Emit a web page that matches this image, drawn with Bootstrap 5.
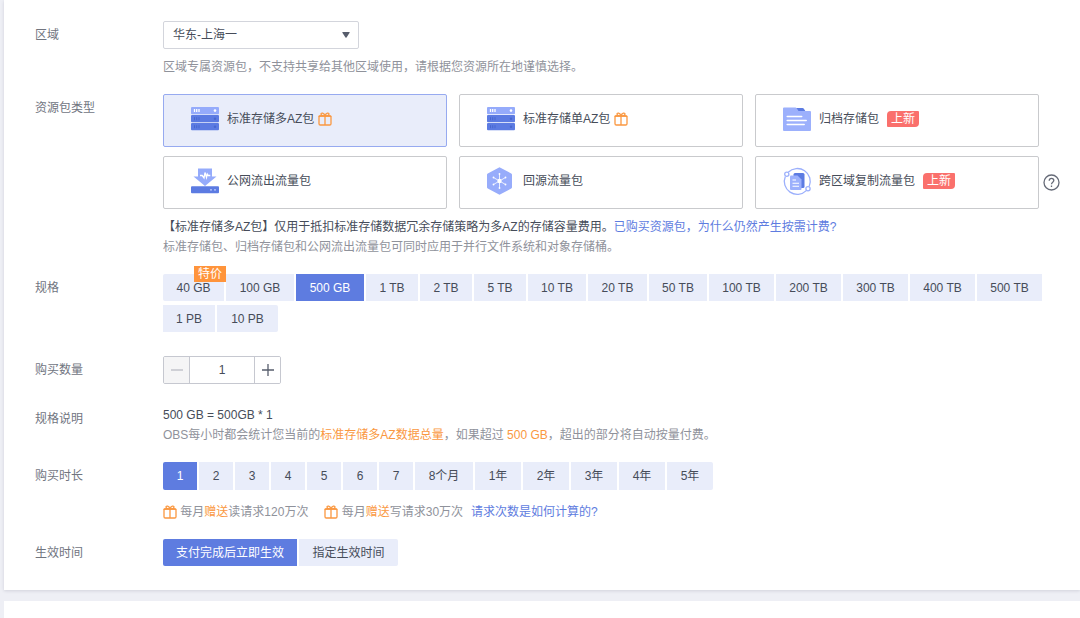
<!DOCTYPE html>
<html lang="zh-CN">
<head>
<meta charset="utf-8">
<meta name="viewport" content="width=device-width, initial-scale=1">
<title>购买资源包</title>
<link href="https://cdn.jsdelivr.net/npm/bootstrap@5.3.0/dist/css/bootstrap.min.css" rel="stylesheet">
<style>
  :root { --ink:#464c59; --soft:#71757f; --muted:#8f929b; --brand:#5e7ce0; --tint:#e9edfa; --orange:#fa9841; }
  body { background:#eeeff5; color:var(--ink); font:12px/20px "Liberation Sans","Noto Sans CJK SC",sans-serif; }
  a { color:var(--brand); text-decoration:none; }
  .panel { background:#fff; box-shadow:0 1px 3px rgba(60,65,85,.16); }
  .order-panel { padding:21px 20px 24px 31px; margin-bottom:11px; }
  .next-panel { min-height:16px; box-shadow:none; }
  .form-line { margin-bottom:17px; }
  .field-label { flex:0 0 128px; color:var(--soft); padding-top:4px; }
  .field-body { flex:1 1 0; min-width:0; }
  .hint { color:var(--muted); }
  .hot { color:var(--orange); }
  .region-select { width:196px; height:28px; padding:0 28px 0 9px; font-size:12px; line-height:20px; color:var(--ink); border:1px solid #d3d5dc; border-radius:2px;
    background:#fff url("data:image/svg+xml,%3Csvg xmlns='http://www.w3.org/2000/svg' viewBox='0 0 8 6'%3E%3Cpath d='M.8 0h6.4q.8 0 .4.7L4.5 5.4q-.5.6-1 0L.4.7Q0 0 .8 0z' fill='%23575d6c'/%3E%3C/svg%3E") no-repeat right 8px center/8px 6px; }
  .pack-grid { display:grid; grid-template-columns:repeat(3,1fr); gap:9px 12px; flex:1 1 0; }
  .pack { display:flex; align-items:center; gap:8px; height:53px; padding:0 27px 3px; border:1px solid #c9cacd; border-radius:2px; background:#fff; color:var(--ink); text-align:left; }
  .pack.active { background:var(--tint); border-color:#97aaf0; }
  .pack > svg { flex:none; width:30px; height:28px; margin-right:-2px; overflow:visible; }
  .gift { width:14px; height:14px; fill:none; stroke:var(--orange); stroke-width:1.3; vertical-align:-3px; }
  .new-tag { background:#fa706c; color:#fff; line-height:16px; padding:0 4px; border-radius:4px 1px; }
  .help { height:53px; }
  .opt { height:27px; padding:0 4px; border:0; border-radius:0; background:var(--tint); color:var(--ink); font-size:12px; line-height:20px; }
  .opt:hover, .pack:hover { color:var(--brand); }
  .opt.active { background:var(--brand); color:#fff; }
  .opts > .opt:first-child { border-radius:2px 0 0 2px; }
  .opts > .opt:last-child { border-radius:0 2px 2px 0; }
  .opts { gap:4px 2px; }
  .opts-tall .opt { height:28px; }
  .w-a { width:34px; } .w-b { width:46px; } .w-c { width:52px; } .w-d { width:58px; } .w-e { width:61px; }
  .w-f { width:65px; } .w-g { width:68px; } .w-h { width:99px; } .w-i { width:134px; } .w-j { width:59px; }
  .sale-tag { position:absolute; top:-8px; right:-2px; width:32px; height:16px; line-height:16px; background:#ff943b; color:#fff; text-align:center; }
  .stepper { width:118px; height:28px; border:1px solid #c6c8d0; border-radius:2px; }
  .stepper button { width:25px; padding:0; border:0; background:#fff; color:#575d6c; }
  .stepper button:disabled { background:#f5f5f6; color:#a9acb5; }
  .stepper input { flex:1 1 0; min-width:0; border:solid #c6c8d0; border-width:0 1px; text-align:center; color:var(--ink); padding:0; border-radius:0; }
</style>
</head>
<body>
<svg width="0" height="0" class="d-none" aria-hidden="true">
  <symbol id="gift" viewBox="0 0 14 14"><rect x="1" y="4" width="12" height="9" rx="1.3"/><path d="M1 5V4.800Q1 4 2 4H12Q13 4 13 5M7 4V13M7 4C4.500 4 3 3.200 3 2.100C3 .6 6 .3 7 4C8 .3 11 .6 11 2.100C11 3.200 9.500 4 7 4"/></symbol>
  <symbol id="server" viewBox="0 0 30 28"><rect x="0" y="2" width="28" height="7.300" rx="1" fill="#95abfb"/><path d="M3.500 4.100v3M5.700 4.100v3M8 4.100v3" stroke="#fff" stroke-width="1.300"/><circle cx="24" cy="5.600" r="1.300" fill="#fff"/><rect x="0" y="10" width="28" height="7.300" rx="1" fill="#5c7be2"/><rect x="0" y="18" width="28" height="7.300" rx="1" fill="#5c7be2"/><path d="M3.500 12.200v3M5.700 12.200v3M8 12.200v3M3.500 20.200v3M5.700 20.200v3M8 20.200v3" stroke="#4868d0"/><circle cx="24" cy="13.700" r="1.200" fill="#4868d0"/><circle cx="24" cy="21.700" r="1.200" fill="#4868d0"/></symbol>
</svg>
<main class="ms-1 min-vh-100 d-flex flex-column">
  <form class="panel order-panel">
    <div class="form-line d-flex">
      <label class="field-label" for="region">区域</label>
      <div class="field-body">
        <select id="region" class="form-select region-select"><option>华东-上海一</option></select>
        <div class="hint mt-2">区域专属资源包，不支持共享给其他区域使用，请根据您资源所在地谨慎选择。</div>
      </div>
    </div>

    <div class="form-line d-flex">
      <div class="field-label">资源包类型</div>
      <div class="field-body">
        <div class="d-flex align-items-end">
          <div class="pack-grid">
            <button type="button" class="pack active" aria-pressed="true"><svg><use href="#server"/></svg><span>标准存储多AZ包 <svg class="gift"><use href="#gift"/></svg></span></button>
            <button type="button" class="pack"><svg><use href="#server"/></svg><span>标准存储单AZ包 <svg class="gift"><use href="#gift"/></svg></span></button>
            <button type="button" class="pack"><svg viewBox="0 0 30 28"><path d="M12 3h7.500q1 0 1.500 1l2 3H14z" fill="#5c7be2"/><path d="M1 2.500h11.500q.8 0 1.200.7L15.500 6H27q1 0 1 1v18q0 1-1 1H1q-1 0-1-1V3.500q0-1 1-1z" fill="#9cb0fc"/><path d="M4.200 11.500h14.500M4.200 15.500h19M4.200 19.500h17" stroke="#fff" stroke-width="1.500" stroke-linecap="round"/></svg><span>归档存储包</span><span class="new-tag">上新</span></button>
            <button type="button" class="pack"><svg viewBox="0 0 30 28"><path d="M7 1.500h14v8h4.500L14 19 2.500 9.500H7z" fill="#95abfb"/><path d="M9 8.500h2.200l1.800 2.500 1-5.500 1.500 5 .8-3.500 1 1.500h2" fill="none" stroke="#fff" stroke-width="1.300"/><rect y="19.300" width="28" height="7" rx="1" fill="#5c7be2"/><circle cx="20" cy="22.800" r=".9" fill="#c3d0ff"/><circle cx="24" cy="22.800" r=".9" fill="#c3d0ff"/></svg><span>公网流出流量包</span></button>
            <button type="button" class="pack"><svg viewBox="0 0 30 28"><path d="M12.500.2 24.200 6.500q.8.400.8 1.300V20.200q0 .9-.8 1.300L12.500 27.800.8 21.500Q0 21.100 0 20.200V7.800Q0 6.900.8 6.500z" fill="#97acfb"/><path d="M12.500 14V7M12.500 14V21M12.500 14 6.500 10.500M12.500 14 18.500 10.500M12.500 14 6.500 17.500M12.500 14 18.500 17.500" stroke="#fff" stroke-width=".8"/><circle cx="12.500" cy="14" r="2.200" fill="#fff"/><g fill="#fff"><circle cx="12.500" cy="7" r=".9"/><circle cx="12.500" cy="21" r=".9"/><circle cx="6.500" cy="10.500" r=".9"/><circle cx="18.500" cy="10.500" r=".9"/><circle cx="6.500" cy="17.500" r=".9"/><circle cx="18.500" cy="17.500" r=".9"/></g></svg><span>回源流量包</span></button>
            <button type="button" class="pack"><svg viewBox="0 0 30 28"><g fill="none" stroke="#9cb0fc" stroke-width="1.300"><path d="M5.200 5.300A12.900 12.900 0 0 1 26.200 19.500M23.300 23.600A12.900 12.900 0 0 1 2.300 9.500"/><circle cx="3.800" cy="7.300" r="2.100"/><circle cx="25" cy="21.800" r="2.100"/></g><rect x="10.500" y="6" width="11" height="15" rx="1.500" fill="#5c7be2"/><path d="M8 8.500h6.500L18.500 12.500V22q0 1-1 1H8q-1 0-1-1V9.500q0-1 1-1z" fill="#9cb0fc"/><path d="M9.500 13h3.500M9.500 16.200h6.500M9.500 19.200h6.500" stroke="#fff" stroke-width="1.100"/></svg><span>跨区域复制流量包</span><span class="new-tag">上新</span></button>
          </div>
          <a href="#help" class="help d-flex align-items-center ms-1" aria-label="帮助"><svg width="17" height="17" viewBox="0 0 17 17" fill="none" stroke="#666b78" stroke-width="1.300"><circle cx="8.500" cy="8.500" r="7.500"/><path d="M6.200 6.800C6.300 3.600 10.800 3.800 10.800 6.600C10.800 8.200 8.500 8.200 8.500 10.200M8.500 11.500v1.500"/></svg></a>
        </div>
        <div class="mt-2">【标准存储多AZ包】仅用于抵扣标准存储数据冗余存储策略为多AZ的存储容量费用。<a href="#billing">已购买资源包，为什么仍然产生按需计费?</a></div>
        <div class="hint">标准存储包、归档存储包和公网流出流量包可同时应用于并行文件系统和对象存储桶。</div>
      </div>
    </div>

    <div class="form-line d-flex mb-4">
      <div class="field-label">规格</div>
      <div class="field-body d-flex flex-wrap opts">
        <button type="button" class="opt w-e position-relative">40 GB<span class="sale-tag">特价</span></button>
        <button type="button" class="opt w-g">100 GB</button>
        <button type="button" class="opt w-g active" aria-pressed="true">500 GB</button>
        <button type="button" class="opt w-c">1 TB</button>
        <button type="button" class="opt w-c">2 TB</button>
        <button type="button" class="opt w-c">5 TB</button>
        <button type="button" class="opt w-d">10 TB</button>
        <button type="button" class="opt w-j">20 TB</button>
        <button type="button" class="opt w-d">50 TB</button>
        <button type="button" class="opt w-f">100 TB</button>
        <button type="button" class="opt w-f">200 TB</button>
        <button type="button" class="opt w-f">300 TB</button>
        <button type="button" class="opt w-f">400 TB</button>
        <button type="button" class="opt w-f">500 TB</button>
        <button type="button" class="opt w-c">1 PB</button>
        <button type="button" class="opt w-e">10 PB</button>
      </div>
    </div>

    <div class="form-line d-flex">
      <label class="field-label" for="qty">购买数量</label>
      <div class="field-body">
        <div class="stepper d-flex overflow-hidden">
          <button type="button" disabled aria-label="减少"><svg width="12" height="12" class="d-block m-auto" stroke="currentColor" stroke-width="1.200"><path d="M0 6h12"/></svg></button>
          <input id="qty" type="text" value="1">
          <button type="button" aria-label="增加"><svg width="12" height="12" class="d-block m-auto" stroke="currentColor" stroke-width="1.300"><path d="M0 6h12M6 0v12"/></svg></button>
        </div>
      </div>
    </div>

    <div class="form-line d-flex">
      <div class="field-label pt-2">规格说明</div>
      <div class="field-body pt-1">
        <div>500 GB = 500GB * 1</div>
        <div class="hint">OBS每小时都会统计您当前的<span class="hot">标准存储多AZ数据总量</span>，如果超过 <span class="hot">500 GB</span>，超出的部分将自动按量付费。</div>
      </div>
    </div>

    <div class="form-line d-flex">
      <div class="field-label">购买时长</div>
      <div class="field-body">
        <div class="d-flex flex-wrap opts opts-tall">
          <button type="button" class="opt w-a active" aria-pressed="true">1</button>
          <button type="button" class="opt w-a">2</button>
          <button type="button" class="opt w-a">3</button>
          <button type="button" class="opt w-a">4</button>
          <button type="button" class="opt w-a">5</button>
          <button type="button" class="opt w-a">6</button>
          <button type="button" class="opt w-a">7</button>
          <button type="button" class="opt w-d">8个月</button>
          <button type="button" class="opt w-b">1年</button>
          <button type="button" class="opt w-b">2年</button>
          <button type="button" class="opt w-b">3年</button>
          <button type="button" class="opt w-b">4年</button>
          <button type="button" class="opt w-b">5年</button>
        </div>
        <div class="hint d-flex flex-wrap mt-2 pt-1">
          <span class="me-3"><svg class="gift"><use href="#gift"/></svg> 每月<span class="hot">赠送</span>读请求120万次</span>
          <span class="me-2"><svg class="gift"><use href="#gift"/></svg> 每月<span class="hot">赠送</span>写请求30万次</span>
          <a href="#requests">请求次数是如何计算的?</a>
        </div>
      </div>
    </div>

    <div class="d-flex">
      <div class="field-label">生效时间</div>
      <div class="field-body d-flex flex-wrap opts">
        <button type="button" class="opt w-i active" aria-pressed="true">支付完成后立即生效</button>
        <button type="button" class="opt w-h">指定生效时间</button>
      </div>
    </div>
  </form>
  <section class="panel next-panel flex-grow-1"></section>
</main>
<script src="https://cdn.jsdelivr.net/npm/bootstrap@5.3.0/dist/js/bootstrap.bundle.min.js"></script>
</body>
</html>
